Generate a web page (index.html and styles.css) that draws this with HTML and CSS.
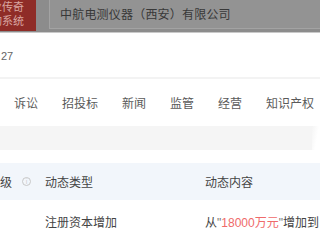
FILE: index.html
```html
<!DOCTYPE html>
<html lang="zh">
<head>
<meta charset="utf-8">
<link rel="stylesheet" href="styles.css">
</head>
<body>
<div class="page">
  <header class="topbar">
    <div class="logo">
      <span class="logo-line">业传奇</span>
      <span class="logo-line">询系统</span>
    </div>
    <div class="search">中航电测仪器（西安）有限公司</div>
  </header>
  <div class="meta"><span class="date">27</span></div>
  <div class="sep"></div>
  <nav class="tabs">
    <span class="tab">诉讼</span>
    <span class="tab">招投标</span>
    <span class="tab">新闻</span>
    <span class="tab">监管</span>
    <span class="tab">经营</span>
    <span class="tab">知识产权</span>
  </nav>
  <div class="graybar"><span class="fade"></span></div>
  <div class="table">
    <div class="thead">
      <div class="c1">级 <span class="info">i</span></div>
      <div class="c2">动态类型</div>
      <div class="c3">动态内容</div>
    </div>
    <div class="trow">
      <div class="c1"></div>
      <div class="c2">注册资本增加</div>
      <div class="c3">从<span class="q">"</span><span class="hl">18000万元</span><span class="q">"</span>增加到</div>
    </div>
  </div>
</div>
</body>
</html>
```
FILE: styles.css
```css
* { box-sizing: border-box; }
html, body { margin: 0; padding: 0; background: #fff; }
body {
  font-family: "Noto Sans CJK SC", "Noto Sans", sans-serif;
  width: 320px;
  height: 240px;
  overflow: hidden;
}
.page { width: 320px; }
.topbar {
  height: 33px;
  background: #8c8c8c;
  display: flex;
  align-items: flex-start;
  border-bottom: 1px solid #c9c9c9;
}
.logo {
  width: 36px;
  height: 31px;
  background: #8f2c27;
  display: flex;
  flex-direction: column;
  align-items: flex-end;
  padding-right: 12px;
  overflow: hidden;
  flex-shrink: 0;
}
.logo-line {
  font-size: 11px;
  line-height: 13.5px;
  color: #d9a6a1;
  white-space: nowrap;
}
.search {
  margin-left: 13px;
  flex: 1;
  height: 29px;
  background: #939393;
  border: 1px solid #a3a3a3;
  border-top: none;
  border-right: none;
  padding-left: 10px;
  font-size: 12px;
  letter-spacing: 0.2px;
  line-height: 27px;
  color: #383838;
  white-space: nowrap;
}
.meta {
  height: 44px;
  display: flex;
  align-items: center;
  padding-left: 1px;
  padding-top: 2px;
}
.date { font-size: 11px; color: #666; font-family: "Liberation Sans", sans-serif; }
.sep { height: 2px; background: #f3f3f3; }
.tabs {
  height: 47px;
  display: flex;
  align-items: center;
  gap: 24px;
  padding-left: 14px;
  font-size: 12px;
  color: #5a5a5a;
  white-space: nowrap;
}
.graybar {
  height: 24px;
  background: #f5f5f5;
  display: flex;
  justify-content: flex-end;
}
.fade {
  width: 8px;
  height: 24px;
  background: linear-gradient(100deg, #f5f5f5 0%, #fff 60%);
}
.table { margin-top: 13px; }
.thead, .trow {
  display: flex;
  align-items: center;
  font-size: 12px;
  white-space: nowrap;
}
.thead { height: 37px; background: #f2f6fb; color: #444; }
.trow { height: 42px; color: #444; }
.c1 { width: 45px; flex-shrink: 0; display: flex; align-items: center; gap: 2px; }
.c2 { width: 160px; flex-shrink: 0; }
.c3 { flex: 1; }
.info {
  width: 9px;
  height: 9px;
  border: 1px solid #c8c8c8;
  border-radius: 50%;
  font-size: 6px;
  line-height: 7px;
  text-align: center;
  color: #c8c8c8;
  margin-left: 8px;
}
.q { font-family: "Liberation Sans", sans-serif; color: #777; }
.hl { color: #ef6a6a; font-family: "Liberation Sans", "Noto Sans CJK SC", sans-serif; }
```
